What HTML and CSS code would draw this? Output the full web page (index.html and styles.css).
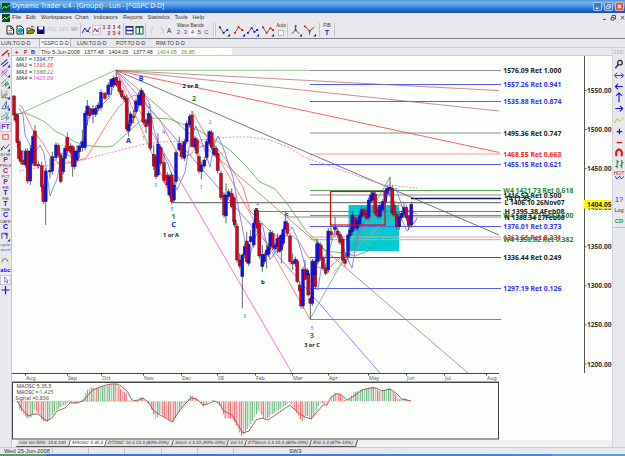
FILE: index.html
```html
<!DOCTYPE html>
<html lang="en">
<head>
    <meta charset="utf-8">
    <title>Dynamic Trader v.4</title>
    <link rel="stylesheet" href="styles.css">
</head>
<body>
    <div class="titlebar">
        <svg class="app-icon" viewBox="0 0 8 8"><rect width="8" height="8" fill="#064d20"/><path d="M0 6L3 3L4 5L8 2" stroke="#5f5" fill="none"/></svg>
        <span class="title">Dynamic Trader v.4 - (Groups) - Lun - [^GSPC D-D]</span>
        <span class="win-btn"><svg viewBox="0 0 8 8"><path d="M2 6H5" stroke="#fff" stroke-width="1.5"/></svg></span>
        <span class="win-btn"><svg viewBox="0 0 8 8"><path d="M3 3V1.5H6.5V5H5M1.5 3.5H5V6.5H1.5Z" stroke="#fff" stroke-width=".8" fill="none"/></svg></span>
        <span class="win-btn close"><svg viewBox="0 0 8 8"><path d="M2 2L6 6M6 2L2 6" stroke="#fff" stroke-width="1.4"/></svg></span>
    </div>

    <div class="menubar">
        <svg class="app-icon" viewBox="0 0 8 8"><rect width="8" height="8" fill="#064d20"/><path d="M0 6L3 3L4 5L8 2" stroke="#5f5" fill="none"/></svg>
        <span>File</span><span>Edit</span><span>Workspaces</span><span>Chart</span><span>Indicators</span><span>Reports</span><span>Statistics</span><span>Tools</span><span>Help</span>
        <svg class="mdi" viewBox="0 0 24 8"><path d="M2 5.500H5M10 3.500H13V6H10ZM11 3V1.500H14.500V5H13.500M20 2L23 5.500M23 2L20 5.500" stroke="#444" stroke-width=".9" fill="none"/></svg>
    </div>

    <div class="toolbar">
        <svg class="tb" viewBox="0 0 9 10"><path d="M1 1H5L7.500 3.500V9H1ZM5 1V4H7.500" fill="#fff" stroke="#222"/><path d="M2.500 5.500H6M2.500 7.300H6" stroke="#555" stroke-width=".6"/></svg>
        <svg class="tb" viewBox="0 0 9 10"><path d="M1 1H5L7.500 3.500V9H1Z" fill="#dff" stroke="#222"/><circle cx="4.500" cy="5.500" r="2.500" fill="#0ab"/></svg>
        <svg class="tb" viewBox="0 0 9 10"><path d="M1 8.500V3H4L5 4H7V5" fill="#fe6" stroke="#222" stroke-width=".8"/><path d="M1 8.500L3 5H9L7 8.500Z" fill="#990" stroke="#222" stroke-width=".8"/><path d="M5 2Q7 0 8 2.500" stroke="#222" fill="none" stroke-width=".8"/></svg>
        <svg class="tb" viewBox="0 0 9 10"><rect x="1" y="1.500" width="7.500" height="7.500" fill="#118"/><rect x="2.500" y="1.500" width="4.500" height="3" fill="#fff"/><rect x="3" y="6.500" width="3.500" height="2.500" fill="#000"/></svg>
        <span class="off">PDL</span>
        <span class="off">DFL</span>
        <span class="off wf">Wf</span>
        <span class="sep"></span>
        <svg class="tb" viewBox="0 0 9 10"><path d="M0 8L3 3L5 7L8.500 2M5.500 5.500L7.500 7.500" stroke="#22f" fill="none"/></svg>
        <svg class="tb pressed" viewBox="0 0 9 10"><path d="M0 8L3 3L5 7L8.500 2" stroke="#d03" fill="none"/><path d="M1 3L5 6.500L8 7.500" stroke="#72d" fill="none"/></svg>
        <div class="nums"><b>1</b><b>2</b><b class="on">3</b><b>4</b><b></b><b>2</b><b>3</b><b>4</b></div>
        <span class="sep"></span>
        <svg class="tb" viewBox="0 0 9 10"><rect x="1" y="1.500" width="7" height="7.500" fill="#fff" stroke="#228"/><path d="M1 2H8M1 5.500H8" stroke="#228" stroke-width="1.300"/></svg>
        <svg class="tb" viewBox="0 0 9 10"><rect x="1" y="1.500" width="7" height="7.500" fill="#fff" stroke="#063"/><path d="M1 2H8M4.500 2V9" stroke="#063" stroke-width="1.300"/></svg>
        <span class="sep"></span>
        <svg class="tb" viewBox="0 0 9 10"><path d="M3 1L5 3L3 6L4 9" stroke="#ccc" fill="none"/></svg>
        <svg class="tb" viewBox="0 0 9 10"><path d="M3 1L4 5L6 5L5 9" stroke="#ccc" fill="none"/></svg>
        <span class="letter">A</span>
        <div class="bands"><span class="cap">Wave Bands</span><span class="band-row"><i>2</i><i>3</i><i class="on">4</i><i>5</i><i>C</i></span></div>
        <span class="sep grip"></span>
        <svg class="tool" viewBox="0 0 14 13"><path d="M2 3L6 9L10 6" stroke="#555" fill="none"/><path d="M1 2h2v2h-2zM5 8h2v2h-2zM9 5h2v2h-2zM13 10V13H10Z" fill="#11e"/></svg>
        <svg class="tool" viewBox="0 0 14 13"><path d="M2 9L6 3L10 6" stroke="#555" fill="none"/><path d="M1 8h2v2h-2zM5 2h2v2h-2zM9 5h2v2h-2z" fill="#e11"/><path d="M13 10V13H10Z" fill="#11e"/></svg>
        <svg class="tool" viewBox="0 0 14 13"><path d="M1 9L5 4L8 8L11 6" stroke="#555" fill="none"/><path d="M0 8h2v2h-2zM4 3h2v2h-2zM7 7h2v2h-2zM10 5h2v2h-2zM13 10V13H10Z" fill="#11e"/></svg>
        <svg class="tool" viewBox="0 0 14 13"><path d="M1 3L5 9L9 4L12 6" stroke="#555" fill="none"/><path d="M0 2h2v2h-2zM4 8h2v2h-2zM8 3h2v2h-2zM11 5h2v2h-2z" fill="#e11"/><path d="M13 10V13H10Z" fill="#11e"/></svg>
        <div class="auto">Auto<span></span></div>
        <span class="sep"></span>
        <svg class="tool" viewBox="0 0 14 13"><path d="M2 10L6 6L10 10M6 1V6" stroke="#444" fill="none"/><path d="M5 5h2v2h-2zM5 1h2v2h-2z" fill="#447"/><path d="M13 10V13H10Z" fill="#11e"/></svg>
        <svg class="tool" viewBox="0 0 14 13"><path d="M1 2L6 7L11 3M6 7V11" stroke="#444" fill="none"/><path d="M0 1h2v2h-2zM5 6h2v2h-2z" fill="#e11"/><path d="M13 10V13H10Z" fill="#11e"/></svg>
        <span class="sep"></span>
        <div class="fib">FIB<b>T</b></div>
        <span class="sep"></span>
    </div>

    <div class="tabs">
        <span>LUN.TO D-D</span><span class="active">^GSPC D-D</span><span>LUN.TO D-D</span><span>POT.TO D-D</span><span>RIM.TO D-D</span>
    </div>

    <div class="workspace">
        <div class="left-tools">
            <svg viewBox="0 0 12 10"><path d="M2 8L9 2" stroke="#e00" stroke-width="1.500"/><path d="M8 5.500H10.500M9.300 5.500V9" stroke="#a00" stroke-width=".8"/></svg>
            <svg viewBox="0 0 12 10"><path d="M1 7L8 1M3 9L9 4" stroke="#22d" stroke-width="1.200"/><path d="M11 7V10H8Z" fill="#11e"/></svg>
            <svg viewBox="0 0 12 10"><path d="M1 6L8 0M1 9L9 2M2 2L8 9" stroke="#d2d" stroke-width=".9"/><path d="M11 7V10H8Z" fill="#11e"/></svg>
            <svg class="h11" viewBox="0 0 12 11"><path d="M1 6L7 1M2 9L9 3M6 9V5H9V7H6" stroke="#283" stroke-width=".9" fill="none"/><path d="M11 8V11H8Z" fill="#11e"/></svg>
            <svg class="h11" viewBox="0 0 12 11"><path d="M2 1V9H9M2 9L8 1M2 9L9 4M8 6H6V9H9" stroke="#884" stroke-width=".9" fill="none"/><path d="M11 8V11H8Z" fill="#11e"/></svg>
            <svg class="h11" viewBox="0 0 12 11"><path d="M2 9L7 1V5M2 9H7M6 9V5L9 9V5" stroke="#35d" stroke-width=".9" fill="none"/><path d="M11 8V11H8Z" fill="#11e"/></svg>
            <svg class="h11" viewBox="0 0 12 11"><path d="M1 6Q6 5 7 1M1 9Q8 7 9 1M7 10V6H9.500V8H7" stroke="#298080" stroke-width=".8" fill="none"/></svg>
            <div class="cell pressed ft">FT</div>
            <svg viewBox="0 0 12 10"><rect x="3" y="2.500" width="6" height="5" fill="none" stroke="#f44"/></svg>
            <svg viewBox="0 0 12 10"><path d="M1 9L4 4L6 7L10 2M1 6L3 8" stroke="#334" stroke-width=".9" fill="none"/><path d="M11 7V10H8Z" fill="#11e"/></svg>
            <div class="cell p">ROW<b>P</b></div>
            <div class="cell p">PRICE<b>C</b></div>
            <div class="cell p">PCT<b>P</b></div>
            <div class="cell">FIB<b>T</b></div>
            <div class="cell">FIB<b>T</b></div>
            <div class="cell">TIME<b>C</b></div>
            <div class="cell">DATE<b>C</b></div>
            <svg class="h12" viewBox="0 0 12 12"><path d="M2 9V3H8" stroke="#33d" fill="none"/><path d="M5 4H9M7.500 4V9" stroke="#333" stroke-width="1.100"/><path d="M11 9V12H8Z" fill="#11e"/></svg>
            <div class="cell cyc">cycle<br>accel</div>
            <svg class="h12" viewBox="0 0 12 12"><path d="M2 8Q5 1 9 8" stroke="#34c" fill="none"/><path d="M2 3h1.500v1.500h-1.500zM8 4h1.500v1.500h-1.500zM1 9h1.500v1.500h-1.500zM8.500 9h1.500v1.500h-1.500z" fill="#ee0"/></svg>
            <div class="cell abc">abc</div>
            <svg class="pressed" viewBox="0 0 12 10"><path d="M5 1V8L6.500 6.500L8 9L9 8.500L8 6H9.500Z" fill="#fff" stroke="#33d" stroke-width=".8"/></svg>
            <svg viewBox="0 0 12 10"><path d="M1.500 5H10.500M6 .5V9.500" stroke="#11e" stroke-width="1.300"/></svg>
        </div>

        <div class="chart-pane">
            <div class="infobar">
                <b class="dot">●</b><b class="f">F</b><b class="b">B</b>
                <span>Thu 5-Jun-2008</span><span>1377.48</span><span>1404.05</span><span>1377.48</span><span class="up">1404.05</span><span class="up">26.85</span>
            </div>
            <svg id="chart" class="chart" viewBox="12 56 600 384"></svg>
            <div class="ind-tabs">
                <span>Hist Vol 50%: 10.6.100</span><span class="active">MAOSC 5.35.5</span><span>DTOSC 10.4.10.3 (80%-20%)</span><span>Stoch 4.3.10 (90%-10%)</span><span>Vol 14</span><span>DTStoch 4.3.10.3 (80%-20%)</span><span>RSI 3.3 (87%-10%)</span>
            </div>
        </div>

        <div class="right-tools">
            <svg viewBox="0 0 12 12"><path d="M1 3H11M1 5.500H11" stroke="#999" stroke-dasharray="2 1"/></svg>
            <svg viewBox="0 0 12 12"><circle cx="7" cy="4" r="2.500" fill="none" stroke="#224" stroke-width="1.300"/><path d="M5 6L2 10" stroke="#224" stroke-width="1.500"/></svg>
            <svg viewBox="0 0 12 12"><path d="M2 6H10M4 3L1 6L4 9M8 3L11 6L8 9" stroke="#11e" fill="none"/></svg>
            <svg viewBox="0 0 12 12"><path d="M2 6H10M5 3L2 6L5 9" stroke="#11e" stroke-width="1.200" fill="none"/></svg>
            <svg viewBox="0 0 12 12"><path d="M6 1V11M3 4L6 1L9 4" stroke="#11e" stroke-width="1.200" fill="none"/></svg>
            <svg viewBox="0 0 12 12"><path d="M2 6H10M7 3L10 6L7 9" stroke="#11e" stroke-width="1.200" fill="none"/></svg>
            <svg viewBox="0 0 12 12"><path d="M1 9L4 4L7 7L11 3" stroke="#bb2" fill="none"/></svg>
            <svg viewBox="0 0 12 12"><path d="M3.500 6H9.500M6.500 3V9" stroke="#11e" stroke-width="1.300"/></svg>
            <svg viewBox="0 0 12 12"><path d="M3.500 6H9.500" stroke="#e11" stroke-width="1.500"/></svg>
            <svg viewBox="0 0 12 12"><path d="M3 9V4Q6 -1 9 4V9" stroke="#d11" stroke-width="2.200" fill="none"/></svg>
            <svg viewBox="0 0 12 12"><path d="M4 1V10M2 8H4M4 3H6M9 1V10M7 7H9M9 4H11" stroke="#182" stroke-width="1.100"/></svg>
            <div class="cell hot">HOT<svg viewBox="0 0 10 4"><path d="M0 0L2 3L5 0L7 3L10 0" stroke="#11e" fill="none"/></svg></div>
            <div class="cell q">1?</div>
            <div class="cell log">Log</div>
            <div class="cell cd">CD</div>
        </div>
    </div>

    <div class="statusbar"><span>Wed 25-Jun-2008</span><span></span><span></span><span></span><span></span><span></span><span>SW3</span></div>
    <div class="taskbar"></div>

    <script src="chart.js"></script>
</body>
</html>
```
FILE: styles.css
```css
* {
    box-sizing: border-box;
}

body {
    margin: 0;
    width: 625px;
    height: 456px;
    overflow: hidden;
    display: flex;
    flex-direction: column;
    background: #e9e9ed;
    font-family: "Liberation Sans", Arial, sans-serif;
    font-size: 6px;
    line-height: 1;
    color: #333;
}

svg {
    display: block;
}

.titlebar {
    height: 13px;
    flex: none;
    display: flex;
    align-items: center;
    padding: 0 1px 0 2px;
    background: linear-gradient(#4a90d8 0, #78b4ea 15%, #559fe4 40%, #2f7bd6 60%, #1a58c8 85%, #1d4fb4 100%);
    color: #eef4ff;
}

.title {
    flex: 1;
    margin-left: 2px;
    font-family: "Noto Sans", sans-serif;
    font-size: 6.6px;
    white-space: nowrap;
}

.app-icon {
    width: 8px;
    height: 8px;
}

.win-btn {
    width: 9px;
    height: 9px;
    margin-left: 2px;
    background: #3c78d8;
    border: 1px solid #9cc4f4;
    border-radius: 1px;
}

.win-btn.close {
    background: #d8503c;
    border-color: #f0b0a8;
}

.menubar {
    height: 9px;
    flex: none;
    display: grid;
    grid-template-columns: 10px 14px 15px 34px 18.5px 29.5px 24.5px 27px 18px 1fr 24px;
    align-items: center;
    padding-left: 2px;
    font-size: 5.6px;
}

.mdi {
    width: 24px;
    height: 8px;
}

.toolbar {
    height: 17px;
    flex: none;
    display: grid;
    grid-template-columns: 9.5px 10px 10.5px 11px 12px 12px 8.5px 2px 10px 10px 21px 2.5px 10px 10px 3px 10px 9px 8px 36px 7px 14.5px 14.5px 14.5px 14px 11px 3px 14.5px 14.5px 2px 13px 2px;
    align-items: center;
    padding-left: 6px;
    border-bottom: 1px solid #7c8288;
}

.tb {
    width: 9px;
    height: 10px;
}

.tool {
    width: 13px;
    height: 13px;
}

.pressed {
    background: #f8f8fb;
    border: 1px solid #c8c8d4;
}

.sep {
    width: 1px;
    height: 14px;
    background: #c4c4d2;
}

.grip {
    margin-left: 2px;
    width: 3px;
    border: solid #c4c4cc;
    border-width: 0 1px;
    background: #fff;
}

.off {
    font-size: 5.2px;
    color: #c2c2c8;
}

.wf {
    color: #889;
}

.nums {
    display: grid;
    grid-template-columns: repeat(4, 5px);
    grid-auto-rows: 6.5px;
    font-size: 5.5px;
    line-height: 6.5px;
    color: #a33;
    text-align: center;
}

.on {
    background: #fff;
}

.letter {
    font-size: 6.5px;
    padding-top: 3px;
}

.bands {
    display: flex;
    flex-direction: column;
    gap: 1px;
}

.cap {
    font-size: 4.8px;
    padding-left: 2px;
}

.band-row {
    display: flex;
}

.band-row i {
    width: 7px;
    text-align: center;
    font-style: normal;
    font-size: 6px;
    line-height: 7px;
    color: #646;
}

.auto {
    font-size: 4.7px;
    display: flex;
    flex-direction: column;
    align-items: center;
}

.auto span {
    width: 6px;
    height: 6px;
    background: #fff;
    border: 1px solid #bbb;
    margin-top: 1px;
}

.fib {
    display: flex;
    flex-direction: column;
    align-items: center;
    font-size: 4.8px;
}

.fib b {
    font-size: 7px;
    line-height: 7px;
    color: #11e;
}

.tabs {
    height: 8px;
    flex: none;
    display: grid;
    grid-template-columns: 38px 38px 39px 40px 39px;
    font-size: 5.2px;
    line-height: 8px;
    padding-left: 1px;
}

.tabs .active {
    width: 32px;
    padding-left: 1px;
    background: #f8f8fa;
    border: solid #b8b8c4;
    border-width: 0 1px;
}

.workspace {
    height: 400px;
    flex: none;
    display: flex;
}

.left-tools {
    width: 12px;
    flex: none;
    border-right: 1px solid #c4c4d0;
    border-top: 1px solid #ccd;
}

.left-tools > svg {
    width: 11px;
    height: 10px;
}

.left-tools > .h11 {
    height: 11px;
}

.left-tools > .h12 {
    height: 12px;
}

.cell {
    height: 11.1px;
    overflow: hidden;
    text-align: center;
    font-size: 4px;
    line-height: 5px;
}

.cell b {
    display: block;
    font-size: 7px;
    line-height: 6px;
    color: #11e;
}

.cell.p b {
    color: #a0128c;
}

.cell.ft {
    height: 10px;
    font-size: 7px;
    font-weight: bold;
    line-height: 8px;
    color: #62c;
}

.cell.cyc {
    height: 12px;
    font-size: 4.2px;
    color: #33c;
}

.cell.abc {
    height: 9px;
    font-size: 6px;
    font-weight: bold;
    line-height: 8px;
    color: #11e;
}

.chart-pane {
    width: 600px;
    display: flex;
    flex-direction: column;
}

.infobar {
    height: 9px;
    flex: none;
    display: grid;
    grid-template-columns: 9px 7px 10px 43px 24.5px 24.5px 24px 24px 1fr;
    padding-left: 3px;
    font-size: 5.5px;
    line-height: 8px;
    border: solid #cacad6;
    border-width: 1px 0;
    background: linear-gradient(90deg, transparent 28px, #fffffa 28px, #fffffa 220px, transparent 220px);
    white-space: nowrap;
}

.dot {
    color: #e11;
}

.f {
    color: #a22;
}

.b {
    color: #22a;
}

.up {
    color: #5a9a3a;
}

.chart {
    width: 600px;
    height: 384px;
    flex: none;
    background: #fcfefc;
    font-family: "Noto Sans", "Open Sans", sans-serif;
}

.ind-tabs {
    height: 7px;
    display: grid;
    grid-template-columns: 53px 36px 67px 55px 18px 65px 46px;
    padding-left: 5px;
    font-size: 4.6px;
    line-height: 6px;
    background: #f1f1f1;
    white-space: nowrap;
}

.ind-tabs span {
    padding-left: 2px;
    border-bottom: 1px solid #555;
    border-right: 1px solid #555;
    transform: skewX(-15deg);
    background: #e2e2e2;
}

.ind-tabs .active {
    background: #fff;
}

.right-tools {
    width: 13px;
    border-left: 1px solid #d4d4de;
    border-top: 1px solid #ccd;
}

.right-tools > svg {
    width: 12px;
    height: 11.1px;
}

.right-tools .cell {
    height: 11.1px;
    line-height: 9px;
}

.right-tools .hot {
    color: #a22;
    font-size: 5px;
    height: 25px;
    line-height: 6px;
}

.hot svg {
    width: 9px;
    height: 4px;
    margin: auto;
}

.right-tools .q {
    font-size: 7px;
    color: #11e;
}

.right-tools .log {
    font-size: 5.5px;
}

.right-tools .cd {
    font-size: 6px;
    font-weight: bold;
    color: #293;
    border-bottom: 1px solid #c4c4d0;
}

.statusbar {
    height: 7px;
    flex: none;
    display: grid;
    grid-template-columns: 49px 36px 36px 37px 36px 36px 1fr;
    padding-left: 4px;
    font-size: 5.8px;
    line-height: 6px;
    border-top: 1px solid #ccc;
    white-space: nowrap;
}

.statusbar span {
    border-right: 1px solid #c4c4cc;
}

.statusbar span:last-child {
    padding-left: 55px;
    border: 0;
}

.taskbar {
    height: 2px;
    flex: none;
    background: linear-gradient(90deg, #5a9a6a 46px, #3a70d8 46px, #4a84e8 552px, #58a0d8 552px);
}
```
FILE: chart.js
```js
const svg = document.getElementById('chart');
const NS = 'http://www.w3.org/2000/svg';

function add(tag, attrs, text) {
    const el = document.createElementNS(NS, tag);
    for (const k in attrs) el.setAttribute(k, attrs[k]);
    if (text) el.textContent = text;
    svg.appendChild(el);
    return el;
}

function line(x1, y1, x2, y2, stroke, width = 0.7) {
    add('line', { x1, y1, x2, y2, stroke, 'stroke-width': width });
}

function text(x, y, str, fill, size = 6, weight = 'normal', len) {
    const a = { x, y, fill, 'font-size': size, 'font-weight': weight };
    if (len) {
        a.textLength = len;
        a.lengthAdjust = 'spacingAndGlyphs';
    }
    return add('text', a, str);
}

const BLUE = '#5a5aff', GREEN = '#58a45c', GRAY = '#8c8c8c', RED = '#ff5050', BROWN = '#b06060';

// projection zone
add('rect', { x: 348.5, y: 205, width: 50.5, height: 46, fill: '#00ccd4' });

// retracement levels: y, line colour, start x, label, label colour
const levels = [
    [70.5, GRAY, 310, '1576.09 Ret 1.000', '#222'],
    [84.5, BLUE, 310, '1557.26 Ret 0.941', '#33f'],
    [101.5, BLUE, 310, '1535.88 Ret 0.874', '#33f'],
    [133, GRAY, 310, '1495.36 Ret 0.747', '#222'],
    [154, '#ff9a9a', 310, '1468.55 Ret 0.663', '#f22'],
    [164.5, BLUE, 310, '1455.15 Ret 0.621', '#33f'],
    [190.5, GREEN, 310, 'W4 1421.73 Ret 0.618', '#282'],
    [195, GRAY, 310, '1416.53 Ret 0.500', '#222'],
    [198.5, '#101060', 411, '1411.85', '#222'],
    [202.7, '#555', 172, ' L 1406.10 26Nov07', '#222'],
    [211.5, '#777', 257, ' H 1395.38 4Feb08', '#222'],
    [215.5, GREEN, 310, 'W4 1393.27 Ret 0.500', '#282'],
    [217, GRAY, 287, ' N 1388.34 27Feb08', '#222'],
    [226.5, BLUE, 310, '1376.01 Ret 0.373', '#33f'],
    [237, '#ff9a9a', 310, '1362.61 Ret 0.331', '#f22'],
    [239.7, '#8ac88a', 310, 'W4 1358.82 Ret 0.382', '#282'],
    [257.5, '#555', 310, '1336.44 Ret 0.249', '#222'],
    [288.5, BLUE, 310, '1297.19 Ret 0.126', '#33f'],
    [319.5, GREEN, 310, '', '']
];
levels.forEach(([y, c, x, label, lc]) => {
    line(x, y, 501, y, c, label === '1411.85' ? 1.4 : 1);
    if (!label) return;
    const w = label.startsWith('W4') ? 70 : label === '1411.85' ? 26 : label.startsWith(' ') ? 60 : 58;
    text(label === '1411.85' ? 505 : label[0] === ' ' ? 504.5 : 503.3, y + 2.5, label.trim(), lc, 6.6, 'bold', w);
});

// fan lines from the October high
line(116, 70.3, 310, 70.3, '#8cc48c', 1);
line(17, 115, 116, 70, GREEN);
line(116, 70.3, 499, 90.6, BROWN);
line(116, 70.3, 499, 111, BROWN);
line(116, 70.3, 499, 152.4, RED, 0.9);
line(116, 70.3, 499, 235, '#555', 0.8);
line(116, 70.3, 468, 373, BROWN);
line(116, 70.3, 380, 373, BLUE);
line(116, 70.3, 292, 373, '#ff60ee', 0.9);
line(116, 70.3, 173, 202, RED);
line(192, 111, 310, 319, RED);
line(310, 319, 390, 177, GREEN);
line(333, 273, 385, 220, '#f09070');

// moving averages
function ma(points, stroke, dash) {
    add('polyline', { points, fill: 'none', stroke, 'stroke-width': 0.8, 'stroke-dasharray': dash || 'none', 'stroke-linejoin': 'round' });
}
ma('19,171 36,168 60,163 83,160 105,154 125,149 145,144 160,142 185,141 210,139 230,137 250,137 270,140 290,148 306,158 330,166 352,174 380,184 417,188', '#f060f0', '2 1.500');
ma('15,114 25,113 35,117 45,122 55,131 65,136 75,142 90,146 105,147 113,146 124,136 140,121 153,118 170,119 182,124 198,130 215,140 230,150 245,165 260,182 275,189 286,202 300,222 307,232 316,240 325,251 335,252 345,253 355,256 368,251 380,238 388,216 399,213 407,231 417,219', GREEN);
ma('19,105 22,107 32,129 43,143 51,158 61,164 74,162 86,158 95,144 107,124 118,108 125,101 134,95 142,98 150,109 160,120 170,140 180,157 190,155 196,148 207,145 215,146 225,158 234,173 243,187 250,211 258,219 267,228 275,236 285,236 293,236 300,243 306,254 314,265 320,268 330,267 340,258 350,253 356,245 362,232 372,217 384,203 395,201 405,209 417,214', '#f86060');
ma('19,108 23,115 25,135 30,145 35,152 40,145 44,153 50,196 57,179 62,153 70,156 74,161 80,149 84,138 90,112 97,112 103,104 109,98 115,83 121,93 127,102 131,126 137,110 144,95 149,102 154,130 160,148 168,164 177,190 185,172 190,142 196,126 202,142 210,167 214,145 218,136 223,147 228,162 233,177 237,200 245,242 249,260 254,240 262,223 270,260 277,250 285,236 292,227 298,240 303,258 308,279 318,290 322,262 330,248 336,226 341,240 347,258 352,268 358,233 366,218 375,203 382,209 388,195 396,188 401,203 408,224 414,223 417,218', '#6a72f4');

// bars: origin x, origin y, then "x top bottom colour [high low]" in third-pixels
const groups = [
    [0, 45, `42 153 210 r 150 228|47 208 225 r|52 210 293 r 205 310|57 290 340 r|62 318 350 r|69 345 358 r 315 360|77 318 360 b|83 318 408 r|91 318 408 b 300 420|96 310 355 b|99 275 340 b|105 258 362 r 240 365|115 358 363 r|125 362 425 r 350 440|130 425 470 r|137 378 470 b 370 540|150 376 381 b 340 400|157 335 378 b 320 390|168 300 338 b|175 302 330 r|182 330 410 r 322 415|190 340 380 b|195 310 340 b|202 278 318 r 262 330|212 303 322 r|218 305 365 r 300 395|224 318 365 b|231 318 345 b 300 352|238 303 320 b 298 340|247 290 308 b 255 320|255 205 308 b|262 183 210 b 165 240|269 190 212 r|279 192 208 b 180 235|287 190 208 b|295 180 190 b|303 142 188 b|315 145 160 r 140 165|325 120 148 b|334 103 125 b 100 150|341 100 120 b|349 97 120 r 76 125|358 108 140 r|365 137 155 r 130 160|373 155 163 r|380 160 252 r 150 260|386 237 258 b 225 275|392 207 235 b|401 213 217 r 195 235|408 168 200 b|416 150 180 b|424 137 180 b 128 185`],
    [140, 60, `5 93 130 b 88 135|10 100 187 r|18 182 200 r 175 220|26 160 190 b|31 170 265 r|41 283 318 r 255 330|48 290 350 r|54 252 345 b 220 350|62 262 310 r|72 308 362 r 280 370|82 345 375 r|88 350 405 b|95 345 425 r|102 375 420 b|108 278 365 b|118 250 270 b 230 275|125 255 290 r|133 245 295 b|140 190 245 b|149 170 195 b|156 165 260 r 153 262|165 235 262 b|171 240 280 r|177 290 333 r|184 315 335 b 305 358|193 300 318 b|200 245 293 b|208 215 250 b 210 255|215 218 263 r|222 265 283 b 240 290|228 265 285 r|233 280 332 r|243 340 413 r|252 405 465 r|258 405 468 b 370 490|266 395 410 b|275 400 440 r 385 445|282 413 485 r`],
    [140, 220, `284 0 15 r|291 18 120 r|299 120 138 r 100 145|307 105 170 b 100 265|314 80 105 b 70 115|320 63 125 r 35 130|326 73 130 b|332 50 65 b 30 70|341 10 75 b|347 -28 10 b -36 15|352 -28 25 r|358 10 108 r|367 103 140 b 75 155|373 105 125 b|380 90 105 b 75 145|386 80 103 b|391 38 78 b|398 40 82 r|405 75 87 b|412 55 80 b 40 100|418 52 95 r 48 98|424 45 90 b 40 130|430 28 70 b|436 5 28 b -25 30|442 10 40 r|450 48 125 r|458 124 132 r 100 150|466 118 130 b 110 140|472 123 185 r 118 190|479 195 212 r 185 215|483 210 258 r|489 148 258 b|495 148 178 r 120 180|505 160 225 r 150 230|511 235 250 r 230 298|517 125 250 b|526 128 200 r|534 70 125 b`],
    [300, 165, `45 290 330 b|38 290 330 b|22 317 330 b|51 237 290 b 220 300|62 240 280 r|69 280 310 r|77 310 325 r 295 330|85 198 315 b|93 200 210 r 175 225|105 187 193 b 155 215|113 198 210 r|120 208 232 r|128 222 285 r|135 283 295 r 265 305|144 210 275 b 205 285|150 195 212 b|157 150 200 b 140 210|165 158 190 r|172 165 190 b|179 150 178 b|185 132 155 b|193 135 150 r|200 145 160 r 125 165|206 105 158 b|213 90 110 b|219 83 105 b 75 110|226 88 145 r|233 135 153 r|240 122 155 b|248 110 135 b|256 78 112 b|262 70 85 b 60 90|270 66 74 b 35 95|277 70 145 r|283 120 148 r|290 148 185 r|298 155 185 b 140 195|305 145 158 b|312 128 148 b 115 155|319 128 158 r|326 155 182 r 150 195|334 118 180 b`]
];
groups.forEach(([ox, oy, data]) => {
    data.split('|').forEach(row => {
        const [x, top, bottom, color, high, low] = row.split(' ');
        const cx = ox + x / 3;
        const h = high === undefined ? +top - 8 : +high;
        const l = low === undefined ? +bottom + 8 : +low;
        line(cx, oy + h / 3, cx, oy + l / 3, '#444', 0.8);
        add('rect', {
            x: cx - 1.5, y: oy + top / 3, width: 3, height: Math.max(1, (bottom - top) / 3),
            fill: color === 'r' ? '#e00010' : '#1010f0', stroke: '#301848', 'stroke-width': 0.4
        });
    });
});

add('rect', { x: 330.5, y: 191.5, width: 54.5, height: 33.5, fill: 'none', stroke: '#d01010', 'stroke-width': 1.2 });

// wave labels
[
    [141, 80.5, 'B', '#22e', 7], [128.5, 143, 'A', '#22e', 7],
    [190.5, 88, '2 or B', '#222', 5.6], [194, 100.5, '2', '#282', 7],
    [173.5, 218.5, '1', '#282', 7], [173.5, 227, 'C', '#22e', 7],
    [171, 236.5, '1 or A', '#222', 5.6], [263, 283.5, 'b', '#222', 6],
    [256, 210.5, 'a', '#222', 6], [287, 215.5, 'c', '#222', 6],
    [312, 337.5, '3', '#282', 7], [312, 346.5, '3 or C', '#222', 5.6]
].forEach(([x, y, s, c, size]) => text(x, y, s, c, size, 'bold').setAttribute('text-anchor', 'middle'));
[
    [143.5, 140, '1'], [149.5, 108, '2'], [155.5, 187, '3'], [163.5, 133.5, '4'], [172, 211, '5'],
    [201, 189, '1'], [210, 123.5, '2'], [244.5, 318, '3'], [257.5, 205.5, '4'], [312, 329.5, '5']
].forEach(([x, y, s]) => text(x, y, s, '#6a6af0', 5.5).setAttribute('text-anchor', 'middle'));

// moving average legend
[['MA1', '1394.77', '#33d'], ['MA2', '1395.36', '#f33'], ['MA3', '1380.22', '#383'], ['MA4', '1425.09', '#e3e']].forEach(([n, v, c], i) => {
    const y = 61 + i * 6.4;
    text(16, y, n + ' =', '#333', 5.6, 'normal', 16).setAttribute('font-style', 'italic');
    text(33, y, v, c, 5.6, 'normal', 20).setAttribute('font-style', 'italic');
});

// price axis
line(584.5, 56, 584.5, 373, '#555', 1);
for (let p = 1200, y = 364; p <= 1550; p += 50, y -= 39.07) {
    line(584.5, y, 586.5, y, '#555', 1);
    text(587, y + 2.5, p.toFixed(2), '#333', 6.6, 'bold', 24.5);
}
add('rect', { x: 583.5, y: 200, width: 28.5, height: 8.5, fill: '#ff0' });
text(587, 206.7, '1404.05', '#222', 6.6, 'bold', 24.5);

// time axis
line(12, 373.5, 499, 373.5, '#444', 1);
[['Aug', 25.5], ['Sep', 67.5], ['Oct', 101.5], ['Nov', 143.5], ['Dec', 181.5], ['08', 217.5], ['Feb', 255.5], ['Mar', 292.5],
 ['Apr', 328.5], ['May', 368.5], ['Jun', 406.5], ['Jul', 444.5], ['Aug', 486.5]].forEach(([m, x]) => {
    line(x, 373, x, 375.5, '#444', 1);
    text(x + 0.5, 380, m, '#555', 5.2);
});

// oscillator panel
line(12, 381.5, 499, 381.5, '#aaa', 1);
add('rect', { x: 12.5, y: 382.5, width: 486, height: 56.5, fill: 'none', stroke: '#444' });
line(13, 401.3, 137, 401.3, '#ccc', 0.7);
const osc = [
    [52, 94], [60, 120], [70, 130], [85, 148], [95, 140], [103, 118], [115, 130], [125, 148], [137, 158], [150, 148], [165, 125], [180, 112],
    [195, 105], [205, 97], [225, 100], [240, 97], [250, 85], [262, 60], [275, 52], [290, 55], [310, 48], [330, 45], [350, 40], [365, 60],
    [380, 70], [383, 90], [400, 94], [425, 80], [440, 95], [450, 105], [467, 148], [480, 130], [500, 145], [520, 158], [540, 120], [560, 92],
    [572, 75], [590, 85], [610, 110], [625, 97], [640, 90], [655, 98], [675, 145], [690, 145], [700, 150], [725, 198], [740, 180], [760, 150],
    [775, 120], [795, 150], [820, 130], [850, 110], [870, 97], [890, 128], [905, 155], [920, 135], [932, 150], [945, 135], [960, 98],
    [980, 105], [990, 90], [1005, 68], [1025, 75], [1035, 93], [1050, 85], [1060, 68], [1080, 60], [1120, 50], [1140, 65], [1170, 55],
    [1185, 70], [1195, 88], [1215, 85], [1235, 93]
];
function oscAt(x) {
    let i = 1;
    while (i < osc.length - 1 && osc[i][0] < x) i++;
    const [x0, y0] = osc[i - 1], [x1, y1] = osc[i];
    return y0 + (y1 - y0) * (x - x0) / (x1 - x0);
}
for (let x = 54, n = 0; x < 1236; x += 5.5, n++) {
    const y = oscAt(x);
    const up = y < oscAt(Math.max(52, x - 6));
    line(x / 3, 401.3, x / 3, 370 + y / 3, up ? (n % 3 ? '#5cb070' : '#a0d0a8') : (n % 3 ? '#f05a5a' : '#ffa8a8'), 1);
}
ma('17,401 22,409 28,416 34,414 38,414 43,418 47,421 52,418 57,411 65,408 70,403 77,403 83,401 89,394 93,390 100,387 106,385 112,384 117,384 121,386 127,391 132,400 137,401 143,398 148,402 154,411 160,415 166,418 172,422 178,413 185,404 191,398 197,399 203,405 208,404 214,401 219,403 224,411 232,415 238,425 243,433 249,431 256,420 262,418 268,420 277,414 284,409 290,405 298,413 305,417 311,419 318,411 323,405 327,405 331,397 336,394 340,394 347,400 354,396 362,390 370,388 376,388 382,391 390,389 396,393 402,399 411,401', '#904040');
text(16.5, 387.6, 'MAOSC 5.35.5', '#433', 5.6, 'normal', 35);
text(16.5, 393.6, 'MAOSC =', '#333', 5.6, 'normal', 22);
text(39.5, 393.6, '1.425', '#383', 5.6, 'normal', 14);
text(15.5, 400, 'Signal =0.836', '#733', 5.6, 'normal', 33.5);
```
